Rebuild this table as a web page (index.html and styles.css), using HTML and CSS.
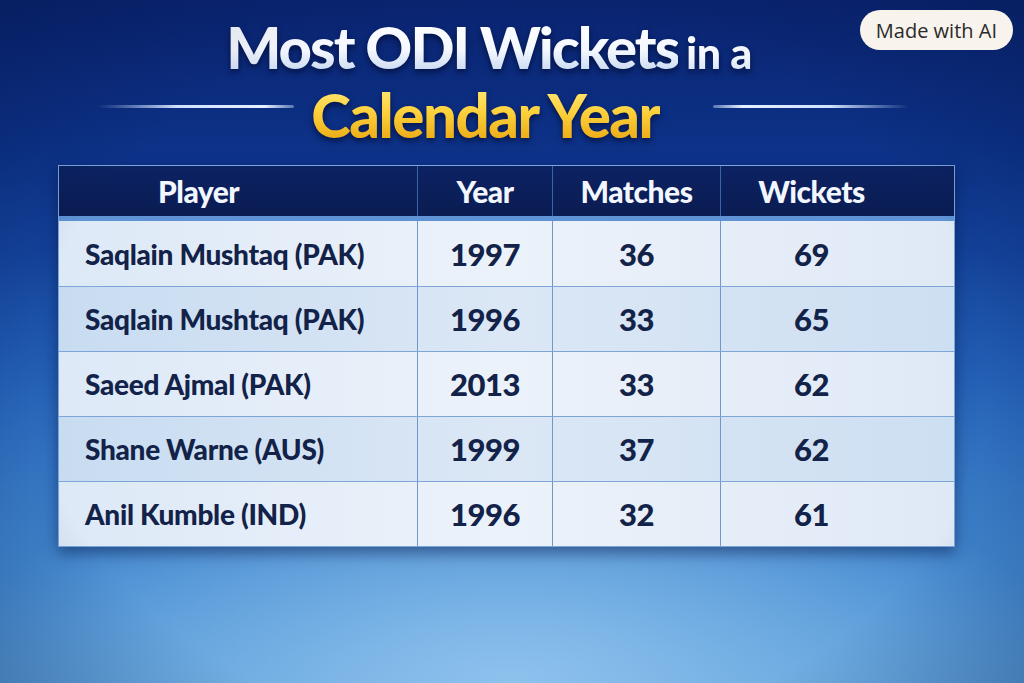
FILE: index.html
```html
<!DOCTYPE html>
<html lang="en">
<head>
<meta charset="utf-8">
<title>Most ODI Wickets in a Calendar Year</title>
<link rel="stylesheet" href="styles.css">
</head>
<body>
<div class="page">
  <div class="badge">Made with AI</div>
  <header class="title">
    <h1 class="line1"><span class="big">Most ODI Wickets</span> <span class="small">in a</span></h1>
    <div class="line2">
      <span class="rule rule-left"></span>
      <span class="gold">Calendar Year</span>
      <span class="rule rule-right"></span>
    </div>
  </header>
  <div class="table">
    <div class="row head">
      <div class="cell c1">Player</div>
      <div class="cell c2">Year</div>
      <div class="cell c3">Matches</div>
      <div class="cell c4">Wickets</div>
    </div>
    <div class="row body r1">
      <div class="cell c1">Saqlain Mushtaq (PAK)</div>
      <div class="cell c2">1997</div>
      <div class="cell c3">36</div>
      <div class="cell c4">69</div>
    </div>
    <div class="row body r2">
      <div class="cell c1">Saqlain Mushtaq (PAK)</div>
      <div class="cell c2">1996</div>
      <div class="cell c3">33</div>
      <div class="cell c4">65</div>
    </div>
    <div class="row body r3">
      <div class="cell c1">Saeed Ajmal (PAK)</div>
      <div class="cell c2">2013</div>
      <div class="cell c3">33</div>
      <div class="cell c4">62</div>
    </div>
    <div class="row body r4">
      <div class="cell c1">Shane Warne (AUS)</div>
      <div class="cell c2">1999</div>
      <div class="cell c3">37</div>
      <div class="cell c4">62</div>
    </div>
    <div class="row body r5">
      <div class="cell c1">Anil Kumble (IND)</div>
      <div class="cell c2">1996</div>
      <div class="cell c3">32</div>
      <div class="cell c4">61</div>
    </div>
  </div>
</div>
</body>
</html>
```

FILE: styles.css
```css
* { box-sizing: border-box; }
html, body { margin: 0; padding: 0; }
body { width: 1024px; height: 683px; overflow: hidden; }

.page {
  position: relative;
  width: 1024px;
  height: 683px;
  display: flex;
  flex-direction: column;
  align-items: center;
  font-family: Lato, "Open Sans", sans-serif;
  background:
    radial-gradient(ellipse 560px 250px at 50% 100%, rgba(165, 210, 245, 0.7), rgba(165, 210, 245, 0) 100%),
    radial-gradient(ellipse 950px 480px at 50% 98%, rgba(90, 160, 225, 0.6), rgba(90, 160, 225, 0) 100%),
    linear-gradient(180deg, #0a2470 0%, #0d3288 22%, #1b55ad 55%, #3a80c8 85%, #5597d2 100%);
}
.page::after {
  content: "";
  position: absolute;
  inset: 0;
  pointer-events: none;
  background: radial-gradient(ellipse 75% 85% at 50% 55%, rgba(0, 20, 70, 0) 62%, rgba(0, 20, 70, 0.4) 100%);
}

.badge {
  position: absolute;
  top: 10px;
  right: 11px;
  z-index: 2;
  height: 40px;
  padding: 0 16px;
  display: flex;
  align-items: center;
  border-radius: 20px;
  background: #f8f3ec;
  color: #2a2a2a;
  font-family: "Open Sans", "Noto Sans", sans-serif;
  font-size: 20px;
}

.title {
  margin-top: 17px;
  display: flex;
  flex-direction: column;
  align-items: center;
}
.line1 {
  margin: 0 0 0 -46px;
  font-weight: 900;
  line-height: 60px;
  height: 60px;
  white-space: nowrap;
  filter: drop-shadow(0 3px 3px rgba(0, 10, 50, 0.75));
}
.big, .small {
  display: inline-block;
  background: linear-gradient(180deg, #ffffff 0%, #f4f8ff 55%, #bfd2ee 100%);
  -webkit-background-clip: text;
  background-clip: text;
  color: transparent;
}
.big { font-size: 58px; letter-spacing: -2px; }
.small { font-size: 43px; letter-spacing: -0.5px; }

.line2 {
  display: flex;
  align-items: center;
  gap: 17px;
  height: 60px;
  margin-top: 8px;
  margin-left: -17px;
}
.gold {
  display: inline-block;
  font-size: 60px;
  font-weight: 900;
  line-height: 60px;
  letter-spacing: -1.5px;
  white-space: nowrap;
  background: linear-gradient(180deg, #ffe97a 0%, #fcd13c 45%, #e9a510 100%);
  -webkit-background-clip: text;
  background-clip: text;
  color: transparent;
  filter: drop-shadow(0 3px 3px rgba(0, 10, 50, 0.75));
}
.rule {
  height: 3px;
  width: 196px;
  border-radius: 2px;
  margin-bottom: 18px;
}
.rule-left { background: linear-gradient(90deg, rgba(170, 205, 255, 0), #cfe2ff 40%, #e6f0ff 85%, rgba(200, 225, 255, 0.4)); }
.rule-right { margin-left: 36px; background: linear-gradient(270deg, rgba(170, 205, 255, 0), #cfe2ff 40%, #e6f0ff 85%, rgba(200, 225, 255, 0.4)); }

.table {
  align-self: flex-start;
  margin-top: 20px;
  margin-left: 58px;
  width: 897px;
  display: flex;
  flex-direction: column;
  box-shadow: 0 6px 14px rgba(0, 20, 70, 0.5);
  border: 1px solid #7aa6dc;
}
.row {
  display: grid;
  grid-template-columns: 358px 135px 168px 1fr;
}
.cell {
  display: flex;
  align-items: center;
  justify-content: center;
  font-weight: 700;
}
.head {
  height: 55px;
  background: linear-gradient(180deg, #0c2262 0%, #0a1c52 100%);
  border-bottom: 5px solid #5f93d6;
}
.head .cell {
  color: #f2f6ff;
  font-size: 30px;
  font-weight: 900;
  letter-spacing: -0.5px;
  border-left: 1px solid #3c64a8;
}
.head .c1 { border-left: none; justify-content: flex-start; padding-left: 99px; }
.head .c4 { padding-right: 52px; }

.body {
  height: 65px;
  border-top: 1px solid #7da6d6;
}
.head + .body { border-top: none; }
.body .cell {
  color: #122248;
  font-size: 31px;
  font-weight: 900;
  letter-spacing: -0.5px;
  border-left: 1px solid #6f98cc;
}
.body .c1 { border-left: none; justify-content: flex-start; padding-left: 26px; font-size: 28px; letter-spacing: -0.3px; }
.body .c4 { padding-right: 52px; }
.r1, .r3, .r5 { background: linear-gradient(90deg, #dde9f7 0%, #ecf2fa 50%, #dfe9f6 100%); }
.r2, .r4 { background: linear-gradient(90deg, #c8dcf1 0%, #dbe7f5 50%, #cddff2 100%); }
```
